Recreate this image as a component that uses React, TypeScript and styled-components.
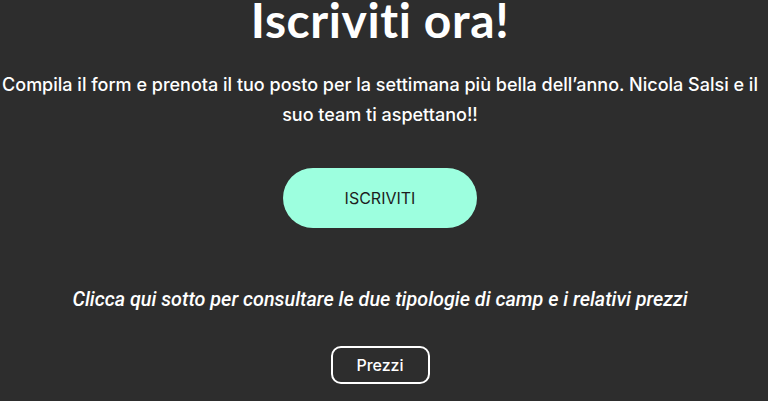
import styled, { createGlobalStyle } from "styled-components";

const GlobalStyle = createGlobalStyle`
  html, body {
    margin: 0;
    padding: 0;
    background: #2d2d2d;
  }
  body {
    font-family: Inter, "Noto Sans", sans-serif;
  }
`;

export default function App() {
  return (
    <>
      <GlobalStyle />
      <Section>
        <Title>Iscriviti ora!</Title>
        <Lead>
          Compila il form e prenota il tuo posto per la settimana più bella
          dell’anno. Nicola Salsi e il suo team ti aspettano!!
        </Lead>
        <SignupButton>ISCRIVITI</SignupButton>
        <Note>
          Clicca qui sotto per consultare le due tipologie di camp e i relativi
          prezzi
        </Note>
        <OutlineButton>Prezzi</OutlineButton>
      </Section>
    </>
  );
}

const Section = styled.section`
  display: flex;
  flex-direction: column;
  align-items: center;
  height: 401px;
  box-sizing: border-box;
  padding: 0 8px 0 0;
  color: #fff;
  text-align: center;
  overflow: hidden;
`;

const Title = styled.h1`
  margin: -6px 0 0;
  font-family: Lato, "Noto Sans", sans-serif;
  font-weight: 700;
  font-size: 48px;
  line-height: 52px;
  letter-spacing: 0.6px;
  white-space: nowrap;
`;

const Lead = styled.p`
  margin: 24px 0 0;
  width: 764px;
  flex-shrink: 0;
  font-size: 18px;
  font-weight: 500;
  line-height: 30px;
`;

const SignupButton = styled.button`
  margin-top: 38px;
  width: 194px;
  height: 60px;
  border: none;
  border-radius: 30px;
  background: #9dffdf;
  color: #1d1d1d;
  font-family: Inter, sans-serif;
  font-size: 16px;
  font-weight: 400;
  cursor: pointer;
`;

const Note = styled.p`
  margin: 59px 0 0;
  font-family: Roboto, sans-serif;
  font-style: italic;
  font-size: 19.8px;
  font-weight: 500;
  line-height: 26px;
`;

const OutlineButton = styled.button`
  margin-top: 33px;
  width: 99px;
  height: 38px;
  border: 2px solid #fff;
  border-radius: 10px;
  background: transparent;
  color: #fff;
  font-family: Inter, sans-serif;
  font-size: 16px;
  font-weight: 500;
  cursor: pointer;
`;
